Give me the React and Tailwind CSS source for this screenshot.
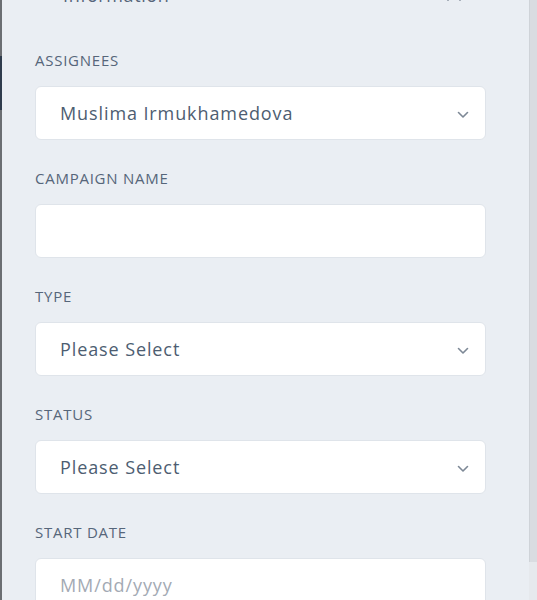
const fields = [
  { label: "Assignees", value: "Muslima Irmukhamedova", select: true },
  { label: "Campaign Name", value: "" },
  { label: "Type", value: "Please Select", select: true },
  { label: "Status", value: "Please Select", select: true },
  { label: "Start Date", placeholder: "MM/dd/yyyy" },
];

function Chevron({ up, size = 12 }) {
  return (
    <svg width={size} height={(size * 2) / 3} viewBox="0 0 12 8" fill="none" className={up ? "rotate-180" : ""}>
      <polyline points="1.5,1.5 6,6 10.5,1.5" stroke="#7d8896" strokeWidth="1.6" strokeLinecap="round" strokeLinejoin="round" />
    </svg>
  );
}

function Field({ label, value, placeholder, select }) {
  return (
    <div className="flex flex-col">
      <label className="h-5 text-[15px] leading-5 uppercase tracking-[0.75px] text-[#56667a]">{label}</label>
      <div className="mt-4 h-[54px] flex items-center justify-between rounded-md border border-[#dfe4ea] bg-white pl-6 pr-4">
        {placeholder ? (
          <span className="text-[18px] text-[#a3aab4] tracking-[0.9px]">{placeholder}</span>
        ) : (
          <span className="text-[18px] text-[#4d5d71] tracking-[0.9px]">{value}</span>
        )}
        {select ? (
          <span className="pt-1">
            <Chevron />
          </span>
        ) : null}
      </div>
    </div>
  );
}

export default function App() {
  return (
    <div
      className="h-[600px] w-[537px] overflow-hidden flex bg-[#eaeef3]"
      style={{ fontFamily: "'Open Sans', 'Noto Sans', sans-serif" }}
    >
      <div className="w-[2px] flex flex-col">
        <div className="h-[56px] bg-[#6b6e72]" />
        <div className="h-[54px] bg-[#2f3c4d]" />
        <div className="flex-1 bg-[#6b6e72]" />
      </div>
      <div className="flex-1 pl-[33px] pr-[43px]">
        <div className="-mt-[15px] h-5 flex items-center justify-between pl-7 pr-6">
          <span className="text-[18px] leading-5 tracking-[0.6px] text-[#56667a]">Information</span>
          <span className="pt-[3px]">
            <Chevron up size={16} />
          </span>
        </div>
        <div className="mt-[45px] flex flex-col gap-7">
          {fields.map((f) => (
            <Field key={f.label} {...f} />
          ))}
        </div>
      </div>
      <div className="w-[8px] flex flex-col bg-[#e6e9ed]">
        <div className="h-[562px] bg-[#d9dce1] border-l border-[#cfd3d8]" />
      </div>
    </div>
  );
}
